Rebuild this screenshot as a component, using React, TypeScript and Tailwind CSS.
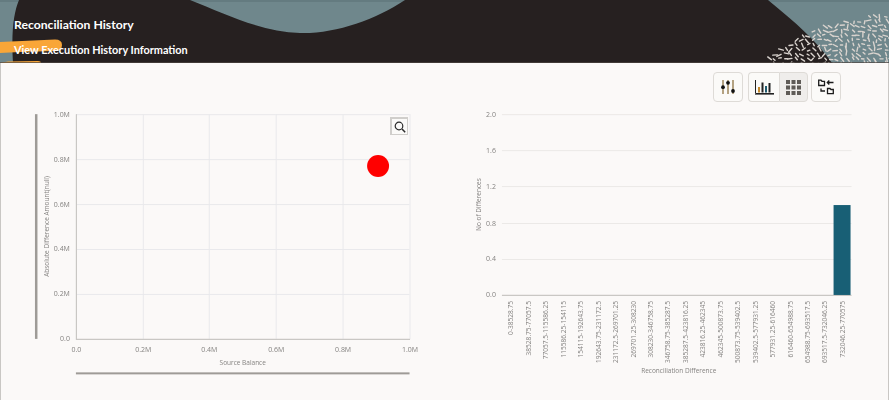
import React from "react";

const FONT = '"Lato", "Open Sans", sans-serif';
const OPEN = '"Open Sans", "Noto Sans", sans-serif';

function rng(seed: number) {
  let s = seed;
  return () => {
    s = (s * 48271) % 2147483647;
    return (s - 1) / 2147483646;
  };
}

function dashes() {
  const r = rng(91823);
  const out: React.ReactElement[] = [];
  const cx = 900;
  const cy = 240;
  for (let i = 0; i < 8; i++) r();
  for (let x = 752; x < 893; x += 5.6) {
    for (let y = 12; y < 66; y += 4.7) {
      const px = x + (r() - 0.5) * 2.8;
      const py = y + (r() - 0.5) * 2.2;
      const d = Math.hypot(px - cx, py - cy);
      const a0 = r();
      const l0 = r();
      if (d > 226) continue;
      const a = 0.5 + (a0 - 0.5) * 2.1 + (px > 840 ? 0.3 : -0.35);
      const l = 1.1 + l0 * 1.4;
      out.push(
        <line
          key={`${x}-${y}`}
          x1={px - Math.cos(a) * l}
          y1={py - Math.sin(a) * l}
          x2={px + Math.cos(a) * l}
          y2={py + Math.sin(a) * l}
          stroke="#d9d3ce"
          strokeWidth="1.4"
          strokeLinecap="round"
        />
      );
    }
  }
  return out;
}

function HeaderArt() {
  return (
    <svg className="absolute inset-0" width="889" height="63" viewBox="0 0 889 63" aria-hidden="true">
      <rect width="889" height="63" fill="#6f878c" />
      <rect width="889" height="2" fill="#647b80" />
      <path
        d="M19 0 C14 12 11 30 13 63 L832 63 C818 42 795 22 768 0 L405 0 C375 20 335 34 300 33 C262 32 225 14 190 0 Z"
        fill="#262020"
      />
      {dashes()}
      <path d="M0 42 L55 39.5 Q62 39.5 62 45 Q62 51 55 51 L20 52 L0 53 Z" fill="#f9a638" />
      <path d="M0 63 L8 61.5 L38 61 Q41 61 41 63 Z" fill="#f9a638" />
      <rect y="62" width="889" height="1" fill="#4e4743" opacity="0.7" />
    </svg>
  );
}

function Btn({ children, className = "" }: { children: React.ReactNode; className?: string }) {
  return (
    <div className={`flex h-[30px] items-center justify-center border border-[#dedbd7] ${className}`}>
      {children}
    </div>
  );
}

function Toolbar() {
  return (
    <div className="flex justify-end pr-[47px] pt-[9px]">
      <Btn className="w-[30px] rounded-[4px] bg-[#fbfaf8]">
        <svg width="16" height="16" viewBox="0 0 16 16">
          <path d="M3 1v14M8 1v14M13 1v14" stroke="#c79a4a" strokeWidth="1" />
          <path d="M3 1v14M8 1v14M13 1v14" stroke="#4a4338" strokeWidth="0.6" />
          <circle cx="3" cy="8.2" r="1.9" fill="#111" />
          <circle cx="8" cy="3.8" r="1.9" fill="#111" />
          <circle cx="13" cy="12" r="1.9" fill="#111" />
        </svg>
      </Btn>
      <div className="ml-[5px] flex">
        <Btn className="w-[31px] rounded-l-[4px] border-r-0 bg-[#fbfaf8]">
          <svg width="19" height="15" viewBox="0 0 19 15">
            <path d="M0.5 0v13.5H19" fill="none" stroke="#222" strokeWidth="1" />
            <path d="M0 14.5h19" stroke="#555" strokeWidth="0.8" />
            <rect x="3" y="7" width="2" height="5.5" fill="#c58a2c" />
            <rect x="6.5" y="2.5" width="2" height="10" fill="#222" />
            <rect x="10" y="6" width="2" height="6.5" fill="#1f5c70" />
            <rect x="13.5" y="3" width="2" height="9.5" fill="#222" />
          </svg>
        </Btn>
        <Btn className="w-[29px] rounded-r-[4px] bg-[#efedeb]">
          <svg width="15" height="15" viewBox="0 0 15 15">
            <g fill="#5f5b57">
              <rect x="0" y="0" width="4" height="4" />
              <rect x="5.5" y="0" width="4" height="4" />
              <rect x="11" y="0" width="4" height="4" />
              <rect x="0" y="5.5" width="4" height="4" />
              <rect x="5.5" y="5.5" width="4" height="4" />
              <rect x="11" y="5.5" width="4" height="4" />
              <rect x="0" y="11" width="4" height="4" />
              <rect x="5.5" y="11" width="4" height="4" />
              <rect x="11" y="11" width="4" height="4" />
            </g>
          </svg>
        </Btn>
      </div>
      <Btn className="ml-[3px] w-[30px] rounded-[4px] bg-[#fbfaf8]">
        <svg width="16" height="16" viewBox="0 0 16 16" fill="none" stroke="#1c1c1c" strokeWidth="1.3">
          <path d="M0.7 6.5V1.2H3L4 2.3H6.5V6.5Z" />
          <path d="M9.5 14.7V9.5H12L13 10.5H15.3V14.7Z" />
          <path d="M15.5 3.5H9.5M11.3 1.5L9.3 3.5L11.3 5.5" />
          <path d="M3 9.5V12H7" />
        </svg>
      </Btn>
    </div>
  );
}

const GRID = "#e9e9ec";
const AXIS = "#c9c7c4";
const LABEL = "#858381";

function ScatterChart() {
  const xs = [76.5, 143.5, 209.5, 276.5, 343.5, 410.5];
  const ys = [339.5, 294.5, 249.5, 204.5, 159.5, 114.5];
  const names = ["0.0", "0.2M", "0.4M", "0.6M", "0.8M", "1.0M"];
  return (
    <svg className="will-change-transform" width="445" height="295" viewBox="0 105 445 295" style={{ fontFamily: OPEN }}>
      {xs.slice(1).map((x) => (
        <line key={x} x1={x} x2={x} y1="114" y2="339" stroke={GRID} />
      ))}
      {ys.slice(1).map((y) => (
        <line key={y} x1="76" x2="410" y1={y} y2={y} stroke={GRID} />
      ))}
      <line x1="76.5" x2="76.5" y1="114" y2="339.5" stroke={AXIS} strokeWidth="1.2" />
      <line x1="76" x2="410.5" y1="339.5" y2="339.5" stroke={AXIS} strokeWidth="1.2" />
      {ys.map((y, i) => (
        <text key={y} x="70" y={y + 2} textAnchor="end" fontSize="7" fill={LABEL}>
          {names[i]}
        </text>
      ))}
      {xs.map((x, i) => (
        <text key={x} x={x} y="352" textAnchor="middle" fontSize="7" fill={LABEL}>
          {names[i]}
        </text>
      ))}
      <text x="243" y="365" textAnchor="middle" fontSize="6.5" fill={LABEL}>
        Source Balance
      </text>
      <text
        transform="translate(49 226.5) rotate(-90)"
        textAnchor="middle"
        fontSize="6.5"
        fill={LABEL}
      >
        Absolute Difference Amount(null)
      </text>
      <rect x="35" y="114" width="2.5" height="225" fill="#9e9b97" />
      <rect x="76" y="372.5" width="334" height="2" fill="#9e9b97" />
      <circle cx="378.5" cy="166" r="11" fill="#ff0000" />
    </svg>
  );
}

const BINS = [
  "0-38528.75",
  "38528.75-77057.5",
  "77057.5-115586.25",
  "115586.25-154115",
  "154115-192643.75",
  "192643.75-231172.5",
  "231172.5-269701.25",
  "269701.25-308230",
  "308230-346758.75",
  "346758.75-385287.5",
  "385287.5-423816.25",
  "423816.25-462345",
  "462345-500873.75",
  "500873.75-539402.5",
  "539402.5-577931.25",
  "577931.25-616460",
  "616460-654988.75",
  "654988.75-693517.5",
  "693517.5-732046.25",
  "732046.25-770575",
];

function BarChart() {
  const ys = [295.5, 259.5, 223.5, 186.5, 150.5, 114.5];
  const names = ["0.0", "0.4", "0.8", "1.2", "1.6", "2.0"];
  const step = (843 - 511) / 19;
  return (
    <svg className="will-change-transform" width="444" height="295" viewBox="445 105 444 295" style={{ fontFamily: OPEN }}>
      {ys.slice(1).map((y) => (
        <line key={y} x1="502" x2="852" y1={y} y2={y} stroke="#ebe9e7" />
      ))}
      <line x1="502" x2="852" y1="295.5" y2="295.5" stroke={AXIS} strokeWidth="1.2" />
      {ys.map((y, i) => (
        <text key={y} x="496" y={y + 2} textAnchor="end" fontSize="7" fill={LABEL}>
          {names[i]}
        </text>
      ))}
      {BINS.map((b, i) => (
        <text
          key={b}
          transform={`translate(${511 + 2.4 + step * i} 301) rotate(-90)`}
          textAnchor="end"
          fontSize="6.6"
          fill={LABEL}
        >
          {b}
        </text>
      ))}
      <text
        transform="translate(481 204.5) rotate(-90)"
        textAnchor="middle"
        fontSize="6.5"
        fill={LABEL}
      >
        No of Differences
      </text>
      <text x="679" y="373" textAnchor="middle" fontSize="6.5" fill={LABEL}>
        Reconciliation Difference
      </text>
      <rect x="834" y="205" width="17" height="90" fill="#185f75" />
    </svg>
  );
}

export default function App() {
  return (
    <div className="h-[400px] w-[889px] overflow-hidden bg-[#fbf9f8]" style={{ fontFamily: FONT }}>
      <header className="relative h-[63px] overflow-hidden pl-[14px] text-white">
        <HeaderArt />
        <h1 className="relative pt-[16px] text-[12.2px] font-bold leading-[18px]">Reconciliation History</h1>
        <p className="relative pt-[8px] text-[10.9px] font-bold leading-[16px]">View Execution History Information</p>
      </header>
      <div className="h-[337px] border-x border-x-[#c9c7c4]">
        <Toolbar />
        <div className="relative -ml-px mt-[3px] flex">
          <ScatterChart />
          <BarChart />
          <div className="absolute left-[390px] top-[12px] flex h-[18px] w-[18px] items-center justify-center border border-[#d0cecb] border-l-2 border-t-2 bg-[#fbfaf8]">
            <svg width="12" height="12" viewBox="0 0 12 12" fill="none" stroke="#2b2b2b" strokeWidth="1.2">
              <circle cx="5" cy="5" r="3.8" />
              <path d="M8 8l3.2 3.2" strokeWidth="1.5" />
            </svg>
          </div>
        </div>
      </div>
    </div>
  );
}
